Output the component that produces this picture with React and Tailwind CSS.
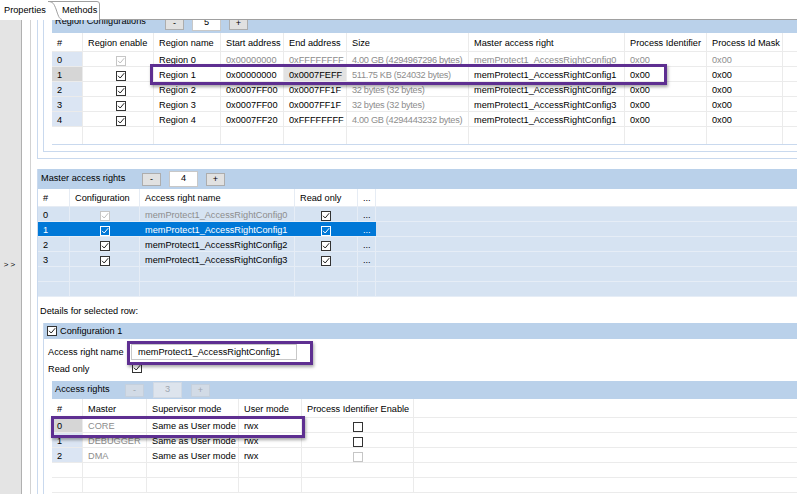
import React from 'react';

const REGIONS = [
  { n: '0', name: 'Region 0', start: '0x00000000', end: '0xFFFFFFFF', size: '4.00 GB (4294967296 bytes)', master: 'memProtect1_AccessRightConfig0', dis: true },
  { n: '1', name: 'Region 1', start: '0x00000000', end: '0x0007FEFF', size: '511.75 KB (524032 bytes)', master: 'memProtect1_AccessRightConfig1', sel: true },
  { n: '2', name: 'Region 2', start: '0x0007FF00', end: '0x0007FF1F', size: '32 bytes (32 bytes)', master: 'memProtect1_AccessRightConfig2' },
  { n: '3', name: 'Region 3', start: '0x0007FF00', end: '0x0007FF1F', size: '32 bytes (32 bytes)', master: 'memProtect1_AccessRightConfig3' },
  { n: '4', name: 'Region 4', start: '0x0007FF20', end: '0xFFFFFFFF', size: '4.00 GB (4294443232 bytes)', master: 'memProtect1_AccessRightConfig1' },
];

const MASTERS = [
  { n: '0', name: 'memProtect1_AccessRightConfig0', dis: true },
  { n: '1', name: 'memProtect1_AccessRightConfig1', sel: true },
  { n: '2', name: 'memProtect1_AccessRightConfig2' },
  { n: '3', name: 'memProtect1_AccessRightConfig3' },
];

const RIGHTS = [
  { n: '0', master: 'CORE', sel: true },
  { n: '1', master: 'DEBUGGER' },
  { n: '2', master: 'DMA', dis: true },
];

function Box({ checked = true, disabled = false, onBlue = false }) {
  const border = disabled ? 'border-[#c6c6c6]' : onBlue ? 'border-white' : 'border-[#333333]';
  const stroke = disabled ? '#bdbdbd' : onBlue ? '#ffffff' : '#222222';
  return (
    <span className={`inline-flex w-[10px] h-[10px] border ${border} ${onBlue ? 'bg-transparent' : 'bg-white'} items-center justify-center`}>
      {checked && (
        <svg width="8" height="8" viewBox="0 0 8 8">
          <path d="M1 3.8 L3.2 6 L7.2 1.2" fill="none" stroke={stroke} strokeWidth="1" />
        </svg>
      )}
    </span>
  );
}

function Btn({ children, disabled }) {
  return (
    <div className={`w-[19px] h-[13px] flex items-center justify-center border text-[9px] leading-none ${disabled ? 'bg-[#d2dbe6] border-[#c5d0dd] text-[#9ea6b0]' : 'bg-[#e1e1e1] border-[#adadad] text-black'}`}>
      {children}
    </div>
  );
}

function Count({ children, disabled }) {
  return (
    <div className={`w-[29px] h-[16px] flex items-center justify-center border ${disabled ? 'bg-[#dde4ed] border-[#d0d9e4] text-[#9ea6b0]' : 'bg-white border-[#c8c8c8] text-black'}`}>
      {children}
    </div>
  );
}

function Cell({ w, className = '', children, line = 'border-[#ebebeb]' }) {
  return (
    <div className={`${w} shrink-0 h-full border-r ${line} px-[5px] pt-[3px] flex items-center overflow-hidden whitespace-nowrap ${className}`}>
      {children}
    </div>
  );
}

function Mark({ className }) {
  return <div className={`absolute border-[3px] border-[#5e2f91] shadow-[1px_2px_3px_rgba(0,0,0,0.35)] pointer-events-none ${className}`} />;
}

export default function App() {
  const gray = 'text-[#8d8d8d]';
  return (
    <div className="relative w-[797px] h-[494px] overflow-hidden bg-white text-black text-[9.2px] leading-none" style={{ fontFamily: '"Liberation Sans", Arial, sans-serif' }}>
      {/* tabs */}
      <div className="flex h-[20px]">
        <div className="w-[48px] h-[19px] pl-[4px] pt-[2px] flex items-center">Properties</div>
        <div className="relative w-[52px] h-[20px]">
          <svg className="absolute inset-0" width="52" height="20" viewBox="0 0 52 20">
            <path d="M0 1.5 C5 1.5 6 4 8 9 C10 15 11 19 14 19.5" fill="none" stroke="#a0a0a0" strokeWidth="1" />
            <path d="M0 1.5 L49 1.5 Q51.5 1.5 51.5 4 L51.5 20" fill="none" stroke="#a0a0a0" strokeWidth="1" />
          </svg>
          <div className="absolute left-[14px] top-[1px] h-[19px] flex items-center">Methods</div>
        </div>
        <div className="flex-1 h-[20px] border-b border-[#a0a0a0]" />
      </div>

      <div className="flex h-[474px]">
        <div className="w-[22px] shrink-0 bg-[#e4e4e4] border-r border-[#b0b0b0] flex items-center justify-center pt-[16px] text-[8px] tracking-[2px]">&gt;&gt;</div>
        <div className="w-[9px] shrink-0 border-r border-[#d2d2d2]" />
        <div className="flex-1 overflow-hidden">
          <div className="-mt-[10px]">
            {/* Region configurations */}
            <div className="ml-[6px] border-l border-b border-[#c9d9ee] pb-[6px]">
              <div className="ml-[5px] border-l border-b border-[#c9d9ee] pb-[6px]">
                <div className="ml-[8px] border-b border-[#c9d9ee]">
                  <div className="h-[23px] bg-[#bad1ea] flex items-end pb-[2px]">
                    <div className="w-[113px] pl-[3px] self-start pt-[7px]">Region Configurations</div>
                    <div className="mb-[1px]"><Btn>-</Btn></div>
                    <div className="ml-[8px]"><Count>5</Count></div>
                    <div className="ml-[8px] mb-[1px]"><Btn>+</Btn></div>
                  </div>
                  <div className="flex h-[19px] border-b border-[#ebebeb]">
                    <Cell w="w-[31px]">#</Cell>
                    <Cell w="w-[71px]">Region enable</Cell>
                    <Cell w="w-[67px]">Region name</Cell>
                    <Cell w="w-[63px]">Start address</Cell>
                    <Cell w="w-[63px]">End address</Cell>
                    <Cell w="w-[122px]">Size</Cell>
                    <Cell w="w-[156px]">Master access right</Cell>
                    <Cell w="w-[82px]">Process Identifier</Cell>
                    <Cell w="w-[76px]">Process Id Mask</Cell>
                    <div className="flex-1" />
                  </div>
                  {REGIONS.map((r) => (
                    <div key={r.n} className="flex h-[15px] border-b border-[#ebebeb]">
                      <Cell w="w-[31px]" className={r.sel ? 'bg-[#d6d6d6]' : 'bg-[#dbe5f3]'}>{r.n}</Cell>
                      <Cell w="w-[71px]" className="justify-center pl-[10px]"><Box disabled={r.dis} /></Cell>
                      <Cell w="w-[67px]">{r.name}</Cell>
                      <Cell w="w-[63px]" className={r.dis ? gray : ''}>{r.start}</Cell>
                      <Cell w="w-[63px]" className={`${r.dis ? gray : ''} ${r.sel ? 'bg-[#e2e2e2]' : ''}`}>{r.end}</Cell>
                      <Cell w="w-[122px]" className={`${gray} tracking-[-0.3px]`}>{r.size}</Cell>
                      <Cell w="w-[156px]" className={r.dis ? gray : ''}>{r.master}</Cell>
                      <Cell w="w-[82px]" className={r.dis ? gray : ''}>0x00</Cell>
                      <Cell w="w-[76px]" className={r.dis ? gray : ''}>0x00</Cell>
                      <div className="flex-1" />
                    </div>
                  ))}
                  <div className="flex h-[17px]">
                    <Cell w="w-[31px]" />
                    <Cell w="w-[71px]" />
                    <Cell w="w-[67px]" />
                    <Cell w="w-[63px]" />
                    <Cell w="w-[63px]" />
                    <Cell w="w-[122px]" />
                    <Cell w="w-[156px]" />
                    <Cell w="w-[82px]" />
                    <Cell w="w-[76px]" />
                    <div className="flex-1" />
                  </div>
                </div>
              </div>
            </div>

            {/* Master access rights and details */}
            <div className="ml-[6px] mt-[10px] border-l border-[#c9d9ee] h-[340px]">
              <div className="h-[20px] bg-[#bad1ea] flex items-center">
                <div className="w-[104px] pl-[3px]">Master access rights</div>
                <Btn>-</Btn>
                <div className="ml-[8px]"><Count>4</Count></div>
                <div className="ml-[8px]"><Btn>+</Btn></div>
              </div>
              <div className="flex h-[18px] border-b border-[#e6ecf4]">
                <Cell w="w-[32px]" line="border-[#e6ecf4]">#</Cell>
                <Cell w="w-[70px]" line="border-[#e6ecf4]">Configuration</Cell>
                <Cell w="w-[155px]" line="border-[#e6ecf4]">Access right name</Cell>
                <Cell w="w-[63px]" line="border-[#e6ecf4]">Read only</Cell>
                <Cell w="w-[18px]" line="border-[#e6ecf4]">...</Cell>
                <div className="flex-1" />
              </div>
              <div className="bg-[#d6e3f2]">
                {MASTERS.map((m) => {
                  const sel = m.sel ? 'bg-[#0078d7] text-white' : '';
                  const line = m.sel ? 'border-[#0078d7]' : 'border-[#e6edf6]';
                  return (
                    <div key={m.n} className="flex h-[15px] border-b border-[#e6edf6]">
                      <Cell w="w-[32px]" line={line} className={sel}>{m.n}</Cell>
                      <Cell w="w-[70px]" line={line} className={`justify-center ${sel}`}><Box disabled={m.dis} onBlue={m.sel} /></Cell>
                      <Cell w="w-[155px]" line={line} className={`${sel} ${m.dis ? gray : ''}`}>{m.name}</Cell>
                      <Cell w="w-[63px]" line={line} className={`justify-center ${sel}`}><Box onBlue={m.sel} /></Cell>
                      <Cell w="w-[18px]" line={line} className={sel}>...</Cell>
                      <div className="flex-1" />
                    </div>
                  );
                })}
                {[0, 1].map((i) => (
                  <div key={i} className="flex h-[15px] border-b border-[#e6edf6]">
                    <Cell w="w-[32px]" line="border-[#e6edf6]" />
                    <Cell w="w-[70px]" line="border-[#e6edf6]" />
                    <Cell w="w-[155px]" line="border-[#e6edf6]" />
                    <Cell w="w-[63px]" line="border-[#e6edf6]" />
                    <Cell w="w-[18px]" line="border-[#e6edf6]" />
                    <div className="flex-1" />
                  </div>
                ))}
              </div>

              <div className="h-[26px] pl-[2px] pt-[3px] flex items-center">Details for selected row:</div>

              {/* Configuration 1 */}
              <div className="ml-[5px] border-l border-[#c9d9ee] h-[180px]">
                <div className="h-[16px] bg-[#bad1ea] flex items-center pl-[3px] gap-[3px]">
                  <Box />
                  <span className="pt-[2px]">Configuration 1</span>
                </div>
                <div className="pl-[4px]">
                  <div className="mt-[4px] h-[17px] flex items-center">
                    <div className="w-[83px] pt-[2px]">Access right name</div>
                    <div className="w-[166px] h-[16px] border border-[#c8c8c8] flex items-center pl-[6px] pt-[2px]">memProtect1_AccessRightConfig1</div>
                  </div>
                  <div className="h-[16px] flex items-center">
                    <div className="w-[84px] pt-[3px]">Read only</div>
                    <Box />
                  </div>
                </div>

                {/* Access rights */}
                <div className="ml-[8px] mt-[5px]">
                  <div className="h-[18px] bg-[#bad1ea] flex items-center">
                    <div className="w-[73px] pl-[3px]">Access rights</div>
                    <Btn disabled>-</Btn>
                    <div className="ml-[9px]"><Count disabled>3</Count></div>
                    <div className="ml-[9px]"><Btn disabled>+</Btn></div>
                  </div>
                  <div className="flex h-[19px] border-b border-[#ebebeb]">
                    <Cell w="w-[31px]">#</Cell>
                    <Cell w="w-[64px]">Master</Cell>
                    <Cell w="w-[92px]">Supervisor mode</Cell>
                    <Cell w="w-[63px]">User mode</Cell>
                    <Cell w="w-[112px]">Process Identifier Enable</Cell>
                    <div className="flex-1" />
                  </div>
                  {RIGHTS.map((r) => (
                    <div key={r.n} className="flex h-[15px] border-b border-[#ebebeb]">
                      <Cell w="w-[31px]" className={r.sel ? 'bg-[#d6d6d6]' : 'bg-[#dbe5f3]'}>{r.n}</Cell>
                      <Cell w="w-[64px]" className={gray}>{r.master}</Cell>
                      <Cell w="w-[92px]">Same as User mode</Cell>
                      <Cell w="w-[63px]">rwx</Cell>
                      <Cell w="w-[112px]" className="justify-center"><Box checked={false} disabled={r.dis} /></Cell>
                      <div className="flex-1" />
                    </div>
                  ))}
                  {[0, 1].map((i) => (
                    <div key={i} className="flex h-[15px] border-b border-[#ebebeb]">
                      <Cell w="w-[31px]" />
                      <Cell w="w-[64px]" />
                      <Cell w="w-[92px]" />
                      <Cell w="w-[63px]" />
                      <Cell w="w-[112px]" />
                      <div className="flex-1" />
                    </div>
                  ))}
                </div>
              </div>
            </div>
          </div>
        </div>
      </div>

      {/* annotation frames */}
      <Mark className="left-[150px] top-[64px] w-[517px] h-[21px]" />
      <Mark className="left-[127px] top-[341px] w-[186px] h-[24px]" />
      <Mark className="left-[51px] top-[416px] w-[254px] h-[22px]" />
    </div>
  );
}
